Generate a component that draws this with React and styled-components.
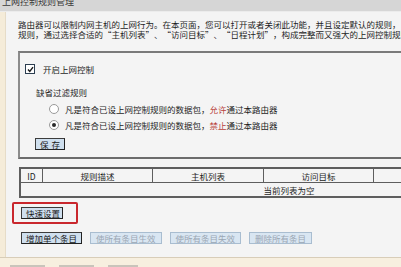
import React from "react";
import styled, { createGlobalStyle, css } from "styled-components";

const GlobalStyle = createGlobalStyle`
  html, body {
    margin: 0;
    padding: 0;
    width: 401px;
    height: 267px;
    overflow: hidden;
    background: #f4f4f4;
  }
  body {
    font-family: "Noto Sans CJK SC", "DejaVu Sans", sans-serif;
    color: #1e1e1e;
  }
`;

const Page = styled.div`
  width: 600px;
  height: 267px;
  display: flex;
  flex-direction: column;
`;

const Header = styled.div`
  height: 12px;
  flex: none;
  background: #d6d6d6;
  border-bottom: 1px solid #ececec;
  box-sizing: border-box;
  padding-left: 2px;
  overflow: hidden;
`;

const Title = styled.div`
  margin-top: -3px;
  font-size: 9px;
  line-height: 9px;
  color: #3a3a3a;
  white-space: nowrap;
`;

const BodyRow = styled.div`
  flex: 1;
  display: flex;
  min-height: 0;
`;

const Strip = styled.div`
  width: 5px;
  flex: none;
  background: #f5ecd9;
  border-right: 1px solid #e6dcc8;
`;

const Content = styled.div`
  flex: 1;
  background: #f4f4f4;
  padding-left: 12px;
  display: flex;
  flex-direction: column;
  align-items: flex-start;
`;

const Intro = styled.div`
  margin-top: 7px;
  font-size: 8.5px;
  line-height: 10px;
  white-space: nowrap;
`;

const Line = styled.div``;

const Quote = styled.span`
  display: inline-block;
  width: 8.5px;
  text-align: ${({ $open }) => ($open ? "right" : "left")};
`;

const Box = styled.div`
  margin-top: 12px;
  width: 560px;
  height: 108px;
  box-sizing: border-box;
  border-top: 2px solid #7a7a7a;
  border-left: 2px solid #8c8c8c;
  border-bottom: 2px solid #6c6c6c;
  padding: 11px 0 0 5px;
  display: flex;
  flex-direction: column;
  align-items: flex-start;
  font-size: 8.5px;
  line-height: 10px;
  white-space: nowrap;
`;

const CheckRow = styled.div`
  display: flex;
  align-items: center;
  gap: 8px;
`;

const CheckBox = styled.span`
  width: 8px;
  height: 8px;
  border: 1px solid #2c3e50;
  background: #fff;
  display: flex;
  align-items: center;
  justify-content: center;
`;

const Legend = styled.div`
  margin: 13px 0 0 11px;
`;

const RadioRow = styled.div`
  display: flex;
  align-items: center;
  gap: 6px;
  margin-left: 24px;
  margin-top: ${({ $first }) => ($first ? "7px" : "6px")};
`;

const Radio = styled.span`
  width: 8px;
  height: 8px;
  border-radius: 50%;
  border: 1px solid #9a9a9a;
  background: #fff;
  display: flex;
  align-items: center;
  justify-content: center;
  &::after {
    content: "";
    width: 4px;
    height: 4px;
    border-radius: 50%;
    background: ${({ $checked }) => ($checked ? "#2a2a2a" : "transparent")};
  }
`;

const Red = styled.span`
  color: #b8403a;
`;

const Button = styled.button`
  font-family: "Noto Sans CJK SC", "DejaVu Sans", sans-serif;
  font-size: 8.5px;
  line-height: 10px;
  height: 12px;
  padding: 0 4px;
  margin: 0;
  box-sizing: border-box;
  white-space: nowrap;
  ${({ $disabled }) =>
    $disabled
      ? css`
          background: #d9e6f2;
          border: 1px solid #a9bdd0;
          color: #9ba7b4;
          padding: 0 5px;
        `
      : css`
          background: #cfdfee;
          border: 1px solid #3c3c3c;
          border-right-color: #222;
          border-bottom-color: #222;
          color: #1a1a1a;
        `}
`;

const SaveButton = styled(Button)`
  margin: 8px 0 0 10px;
  width: 30px;
  letter-spacing: 3px;
  padding-left: 4px;
`;

const Table = styled.table`
  margin-top: 8px;
  margin-left: 1px;
  width: 540px;
  border-collapse: collapse;
  font-size: 8.5px;
  line-height: 10px;
  white-space: nowrap;
  border: 2px solid #5e5e5e;
`;

const Th = styled.th`
  font-weight: normal;
  height: 13px;
  padding: 0;
  border: 1px solid #5e5e5e;
  width: ${({ $w }) => $w}px;
  text-align: center;
`;

const Td = styled.td`
  height: 13px;
  padding: 0;
  text-align: center;
  border: 1px solid #5e5e5e;
`;

const Highlight = styled.div`
  margin: 4px 0 0 -6px;
  border: 2px solid #c9272d;
  border-radius: 2px;
  padding: 3px 13px 3px 7px;
  display: flex;
`;

const QuickButton = styled(Button)`
  width: 42px;
`;

const ButtonRow = styled.div`
  margin: 8px 0 0 3px;
  display: flex;
  gap: 8px;
`;

const Footer = styled.div`
  height: 9px;
  flex: none;
  background: #f7efdf;
  border-top: 1px solid #d8cdb8;
  display: flex;
  align-items: flex-end;
  gap: 14px;
  padding-left: 10px;
`;

const FooterTab = styled.span`
  width: ${({ $w }) => $w}px;
  height: 2px;
  background: #c9c4bb;
`;

const Q = ({ children }) => (
  <>
    <Quote $open>“</Quote>
    {children}
    <Quote>”</Quote>
  </>
);

export default function App() {
  return (
    <>
      <GlobalStyle />
      <Page lang="zh-CN">
        <Header>
          <Title>上网控制规则管理</Title>
        </Header>
        <BodyRow>
          <Strip />
          <Content>
            <Intro>
              <Line>路由器可以限制内网主机的上网行为。在本页面，您可以打开或者关闭此功能，并且设定默认的规则，</Line>
              <Line>
                规则，通过选择合适的<Q>主机列表</Q>、<Q>访问目标</Q>、<Q>日程计划</Q>，构成完整而又强大的上网控制规则。
              </Line>
            </Intro>
            <Box>
              <CheckRow>
                <CheckBox>
                  <svg width="7" height="7" viewBox="0 0 7 7">
                    <path d="M1 3.5 L2.8 5.5 L6 1.2" fill="none" stroke="#1a1a1a" strokeWidth="1.4" />
                  </svg>
                </CheckBox>
                <span>开启上网控制</span>
              </CheckRow>
              <Legend>缺省过滤规则</Legend>
              <RadioRow $first>
                <Radio />
                <span>
                  凡是符合已设上网控制规则的数据包，<Red>允许</Red>通过本路由器
                </span>
              </RadioRow>
              <RadioRow>
                <Radio $checked />
                <span>
                  凡是符合已设上网控制规则的数据包，<Red>禁止</Red>通过本路由器
                </span>
              </RadioRow>
              <SaveButton>保存</SaveButton>
            </Box>
            <Table>
              <thead>
                <tr>
                  <Th $w={21}>ID</Th>
                  <Th $w={109}>规则描述</Th>
                  <Th $w={110}>主机列表</Th>
                  <Th $w={109}>访问目标</Th>
                  <Th>日程计划</Th>
                </tr>
              </thead>
              <tbody>
                <tr>
                  <Td colSpan={5}>当前列表为空</Td>
                </tr>
              </tbody>
            </Table>
            <Highlight>
              <QuickButton>快速设置</QuickButton>
            </Highlight>
            <ButtonRow>
              <Button>增加单个条目</Button>
              <Button $disabled>使所有条目生效</Button>
              <Button $disabled>使所有条目失效</Button>
              <Button $disabled>删除所有条目</Button>
            </ButtonRow>
          </Content>
        </BodyRow>
        <Footer>
          <FooterTab $w={35} />
          <FooterTab $w={35} />
          <FooterTab $w={30} />
        </Footer>
      </Page>
    </>
  );
}
